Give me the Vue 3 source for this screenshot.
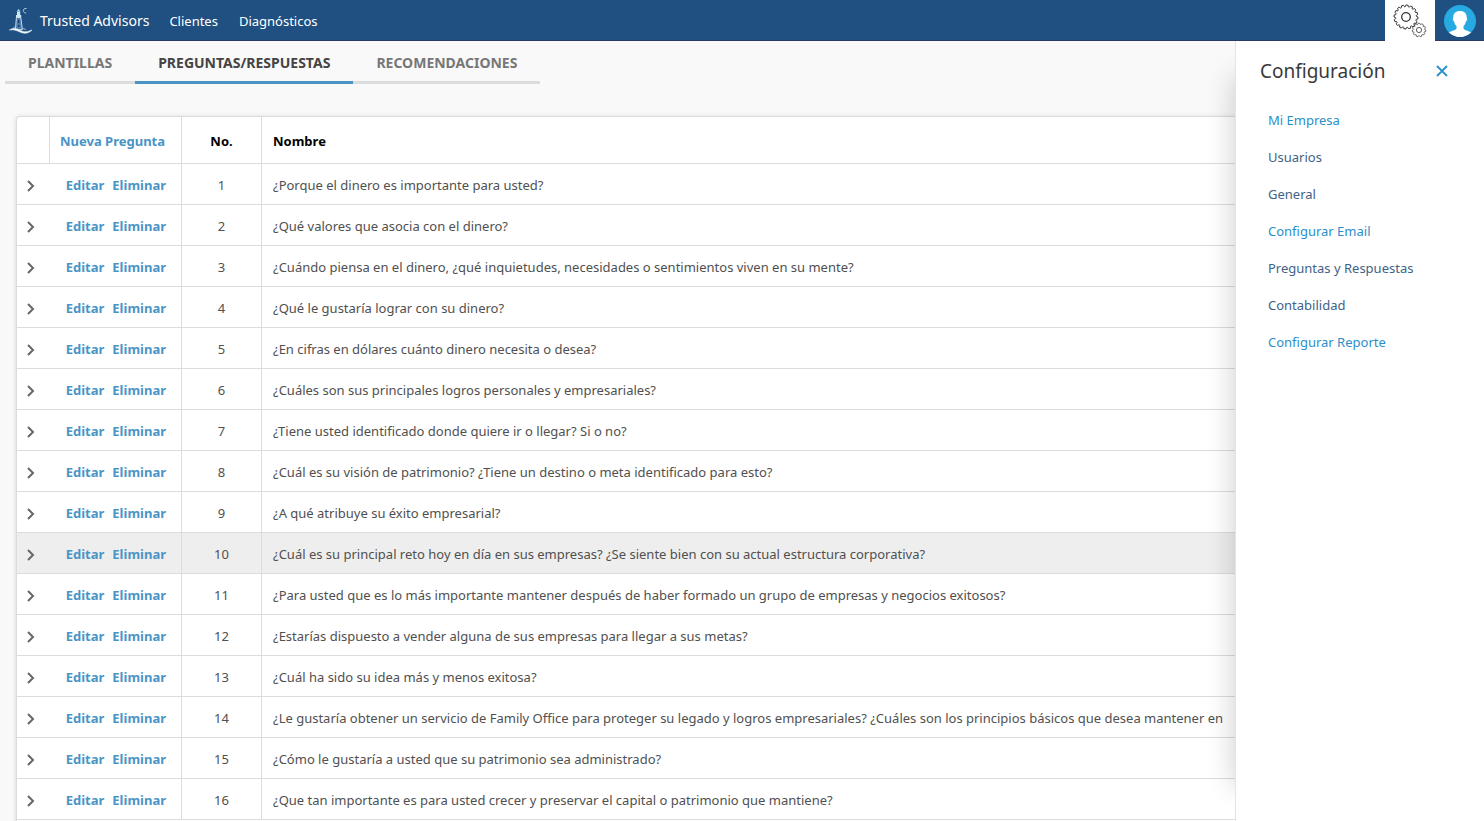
<script setup>
import { ref } from 'vue'

const tabs = ['Plantillas', 'Preguntas/Respuestas', 'Recomendaciones']
const activeTab = ref('Preguntas/Respuestas')
const panelOpen = ref(true)
const selected = ref(10)

const preguntas = [
  '¿Porque el dinero es importante para usted?',
  '¿Qué valores que asocia con el dinero?',
  '¿Cuándo piensa en el dinero, ¿qué inquietudes, necesidades o sentimientos viven en su mente?',
  '¿Qué le gustaría lograr con su dinero?',
  '¿En cifras en dólares cuánto dinero necesita o desea?',
  '¿Cuáles son sus principales logros personales y empresariales?',
  '¿Tiene usted identificado donde quiere ir o llegar? Si o no?',
  '¿Cuál es su visión de patrimonio? ¿Tiene un destino o meta identificado para esto?',
  '¿A qué atribuye su éxito empresarial?',
  '¿Cuál es su principal reto hoy en día en sus empresas? ¿Se siente bien con su actual estructura corporativa?',
  '¿Para usted que es lo más importante mantener después de haber formado un grupo de empresas y negocios exitosos?',
  '¿Estarías dispuesto a vender alguna de sus empresas para llegar a sus metas?',
  '¿Cuál ha sido su idea más y menos exitosa?',
  '¿Le gustaría obtener un servicio de Family Office para proteger su legado y logros empresariales? ¿Cuáles son los principios básicos que desea mantener en',
  '¿Cómo le gustaría a usted que su patrimonio sea administrado?',
  '¿Que tan importante es para usted crecer y preservar el capital o patrimonio que mantiene?'
]

const opciones = [
  { label: 'Mi Empresa', bright: true },
  { label: 'Usuarios', bright: false },
  { label: 'General', bright: false },
  { label: 'Configurar Email', bright: true },
  { label: 'Preguntas y Respuestas', bright: false },
  { label: 'Contabilidad', bright: false },
  { label: 'Configurar Reporte', bright: true }
]

// Outline of a gear: flat teeth with rounded notches between them
const gear = (cx, cy, outer, notch, teeth) => {
  const step = (Math.PI * 2) / teeth
  const at = (r, a) => `${(cx + r * Math.cos(a)).toFixed(2)} ${(cy + r * Math.sin(a)).toFixed(2)}`
  let d = `M${at(outer, 0)}`
  for (let i = 0; i < teeth; i++) {
    const a = i * step
    d += `L${at(outer, a + step * 0.45)}Q${at(notch, a + step * 0.72)} ${at(outer, a + step)}`
  }
  return `${d}Z`
}

const bigGear = gear(13, 13, 12, 8.4, 16)
const smallGear = gear(26, 26, 6.8, 4.2, 11)
</script>

<template>
  <div class="page">
    <header class="topbar">
      <a href="#" class="brand">
        <svg width="26" height="28" viewBox="0 0 26 28" aria-hidden="true">
          <path d="M8.400 10.500h4.400l1.600 12-7 .6z" fill="#4a7aa8" stroke="#c5dced" stroke-width="1" />
          <path d="M8 8h5.200v2.500H8zM9 5h3.200v3H9z" fill="#cfe6f2" />
          <path d="M8.500 4.800l2.100-3 2.100 3z" fill="#9fd3dc" />
          <path d="M10.600 13v3M10.800 18v2" stroke="#123f6d" stroke-width="1.400" />
          <path d="M18.500 1.500c-2.300-.4-3.400 1-3.200 2.300.2 1.300 1.400 2.400 2.900 2.300" fill="none" stroke="#a9c6dd" stroke-width="1" />
          <path d="M1.500 23c4-2.600 7-1.500 11 .5 4 2 7 1.500 11.500-.5-4 4-8.500 3.800-12.500 1.800-3.500-1.700-6-2.500-10-1.800z" fill="#fff" stroke="#dbe9f5" stroke-width=".7" />
          <path d="M5.500 21l2-2M15 21.500l3 1" stroke="#8fb3d2" stroke-width="1" />
        </svg>
        <span>Trusted Advisors</span>
      </a>
      <nav class="menu">
        <a href="#">Clientes</a>
        <a href="#">Diagnósticos</a>
      </nav>
      <button type="button" class="gear-btn" aria-label="Configuración" @click="panelOpen = !panelOpen">
        <svg width="34" height="34" viewBox="0 0 34 34" fill="none" stroke="#333">
          <path :d="bigGear" stroke-width="1" />
          <circle cx="13" cy="13" r="4.300" stroke-width="1.300" />
          <path :d="smallGear" stroke-width=".7" />
          <circle cx="26" cy="26" r="2.600" stroke-width=".8" />
        </svg>
      </button>
      <button type="button" class="user-btn" aria-label="Usuario">
        <svg width="32" height="32" viewBox="0 0 32 32">
          <circle cx="16" cy="16" r="16" fill="#27a9e1" />
          <path d="M16 6c-4.600 0-6.900 2.600-6.700 6.700-.8.400-.6 2.900.7 3.600.4 2.200 1.500 3.900 2.500 4.800v2.500c-1 1.900-5.200 2.200-7.700 4a16 16 0 0 0 22.400 0c-2.500-1.800-6.700-2.100-7.700-4v-2.500c1-.9 2.100-2.600 2.500-4.800 1.300-.7 1.500-3.200.7-3.600C22.900 8.600 20.600 6 16 6z" fill="#fff" />
        </svg>
      </button>
    </header>

    <div class="body">
      <main class="content">
        <div class="tabs" role="tablist">
          <button
            v-for="tab in tabs"
            :key="tab"
            type="button"
            role="tab"
            :aria-selected="tab === activeTab"
            :class="['tab', { active: tab === activeTab }]"
            @click="activeTab = tab"
          >
            {{ tab }}
          </button>
        </div>

        <div class="card">
          <table>
            <thead>
              <tr>
                <th class="col-expand"></th>
                <th class="col-actions"><a href="#">Nueva Pregunta</a></th>
                <th class="col-no">No.</th>
                <th class="col-name">Nombre</th>
              </tr>
            </thead>
            <tbody>
              <tr
                v-for="(pregunta, index) in preguntas"
                :key="index"
                :class="{ selected: selected === index + 1 }"
                @mouseenter="selected = index + 1"
              >
                <td class="col-expand">
                  <button type="button" class="expand" aria-label="Expandir">
                    <svg width="10" height="14" viewBox="0 0 10 14" fill="none" stroke="#666" stroke-width="2">
                      <path d="M2 3l5 5-5 5" />
                    </svg>
                  </button>
                </td>
                <td class="col-actions">
                  <div class="actions">
                    <a href="#">Editar</a>
                    <a href="#">Eliminar</a>
                  </div>
                </td>
                <td class="col-no">{{ index + 1 }}</td>
                <td class="col-name">{{ pregunta }}</td>
              </tr>
            </tbody>
          </table>
        </div>
      </main>

      <aside v-if="panelOpen" class="panel">
        <div class="panel-head">
          <h2>Configuración</h2>
          <button type="button" class="close" aria-label="Cerrar" @click="panelOpen = false">
            <svg width="12" height="12" viewBox="0 0 12 12" stroke="#2a8fcb" stroke-width="1.800">
              <path d="M1 1l10 10M11 1L1 11" />
            </svg>
          </button>
        </div>
        <ul>
          <li v-for="opcion in opciones" :key="opcion.label">
            <a href="#" :class="{ bright: opcion.bright }">{{ opcion.label }}</a>
          </li>
        </ul>
      </aside>
    </div>
  </div>
</template>

<style>
body {
  background: #f9f9f9;
}
</style>

<style scoped>
* {
  box-sizing: border-box;
}

.page {
  height: 100vh;
  display: flex;
  flex-direction: column;
  overflow: hidden;
  font-family: "Noto Sans", "Open Sans", sans-serif;
  font-size: 13px;
  color: #505050;
}

a {
  text-decoration: none;
}

button {
  font: inherit;
  border: none;
  background: none;
  padding: 0;
  cursor: pointer;
}

svg {
  display: block;
}

.topbar {
  flex: none;
  display: flex;
  align-items: stretch;
  height: 41px;
  background: #1f5081;
  box-shadow: inset 0 -1px #2b3a63;
}

.topbar a {
  display: flex;
  align-items: center;
  color: #fff;
}

.brand {
  gap: 6px;
  padding-left: 8px;
  font-size: 14px;
}

.menu {
  flex: 1;
  display: flex;
  gap: 21px;
  padding-left: 20px;
}

.gear-btn {
  width: 50px;
  padding: 4px 0 0 8px;
  display: flex;
  background: #fff;
}

.user-btn {
  width: 49px;
  display: flex;
  align-items: center;
  justify-content: center;
}

.body {
  flex: 1;
  min-height: 0;
  display: flex;
}

.content {
  flex: 1;
  min-width: 0;
  overflow: hidden;
}

.tabs {
  display: flex;
  padding-left: 5px;
}

.tab {
  height: 43px;
  padding: 2px 23px 0;
  border-bottom: 3px solid #dcdcdc;
  font-size: 14px;
  font-weight: bold;
  text-transform: uppercase;
  color: #777;
}

.tab.active {
  border-bottom-color: #4a94c6;
  color: #444;
}

.card {
  margin: 32px 0 0 16px;
  min-height: 100%;
  background: #fff;
  border: 1px solid #dcdcdc;
  border-right: none;
  border-radius: 4px 0 0 0;
  box-shadow: 0 1px 5px rgba(0, 0, 0, 0.15);
}

table {
  width: 100%;
  table-layout: fixed;
  border-collapse: separate;
  border-spacing: 0;
}

th,
td {
  height: 41px;
  padding: 2px 0 0;
  border-bottom: 1px solid #dcdcdc;
  text-align: left;
  white-space: nowrap;
}

th {
  height: 47px;
  color: #000;
}

tr.selected td {
  background: #eee;
}

table a {
  color: #4a94c6;
  font-weight: bold;
}

.col-expand {
  width: 33px;
}

th.col-expand {
  border-right: 1px solid #dcdcdc;
}

.col-actions {
  width: 132px;
  border-right: 1px solid #dcdcdc;
}

th.col-actions {
  padding-left: 10px;
}

.actions {
  display: flex;
  justify-content: flex-end;
  gap: 8px;
  padding-right: 15px;
}

.col-no {
  width: 80px;
  border-right: 1px solid #dcdcdc;
  text-align: center;
}

.col-name {
  padding-left: 11px;
}

.expand {
  display: block;
  margin-left: 9px;
}

.panel {
  position: relative;
  flex: none;
  width: 249px;
  border-left: 1px solid #e4e4e4;
  background: #fff;
  box-shadow: -35px 0 28px -35px rgba(0, 0, 0, 0.2);
}

.panel-head {
  display: flex;
  align-items: center;
  justify-content: space-between;
  height: 60px;
  padding: 0 36px 0 24px;
}

h2 {
  margin: 0;
  font-size: 19px;
  font-weight: normal;
  color: #3a3a3a;
}

ul {
  margin: 0;
  padding: 1px 0 0 32px;
  list-style: none;
}

li {
  height: 37px;
  line-height: 37px;
}

li a {
  color: #3f6285;
}

li a.bright {
  color: #2a8fcb;
}
</style>
